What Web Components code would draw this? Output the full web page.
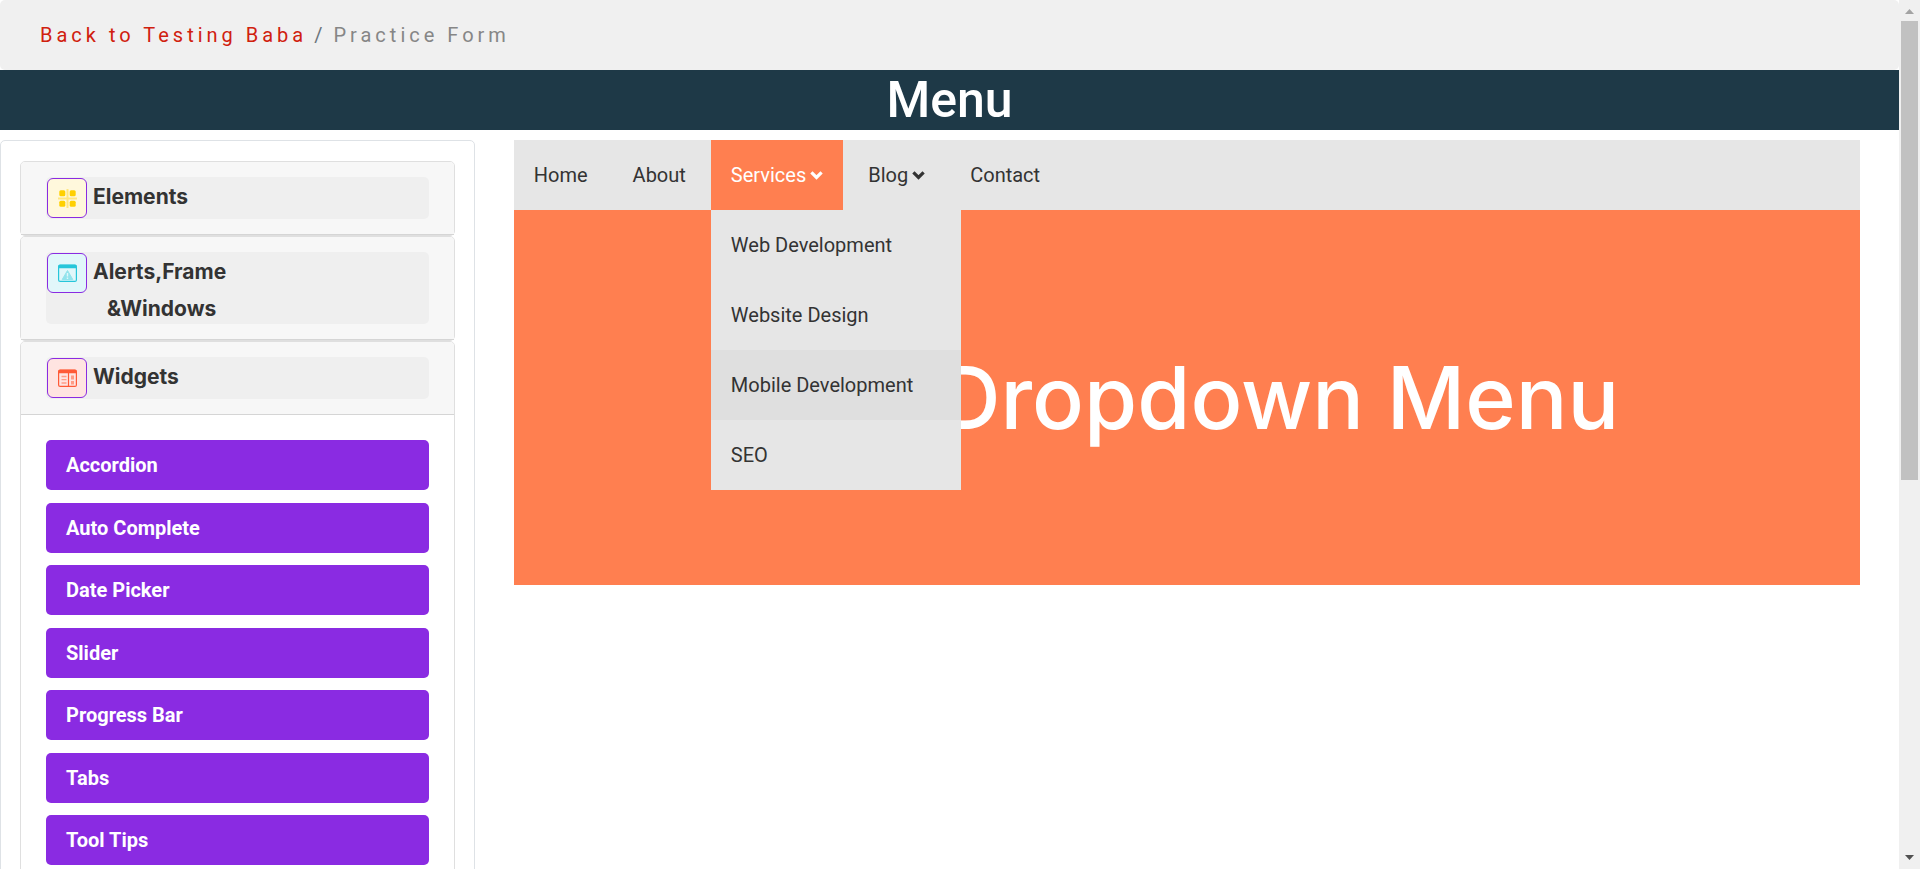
<!DOCTYPE html>
<html lang="en">
<head>
<meta charset="utf-8">
<title>Menu - Practice Form</title>
<style>
html, body { margin: 0; height: 100%; }
body { font-family: Roboto, "Liberation Sans", sans-serif; font-size: 20px; color: #333; background: #fff; overflow: hidden; }
</style>
</head>
<body>
<practice-page>
  <bread-crumb slot="top" href="#home" parent="Back to Testing Baba" current="Practice Form"></bread-crumb>
  <page-title slot="top">Menu</page-title>
  <side-panel slot="side">
    <accordion-card icon="elements">Elements</accordion-card>
    <accordion-card icon="alerts">Alerts,Frame<span slot="second">&amp;Windows</span></accordion-card>
    <accordion-card icon="widgets" open>Widgets
      <side-link slot="body" href="#accordion">Accordion</side-link>
      <side-link slot="body" href="#auto-complete">Auto Complete</side-link>
      <side-link slot="body" href="#date-picker">Date Picker</side-link>
      <side-link slot="body" href="#slider">Slider</side-link>
      <side-link slot="body" href="#progress-bar">Progress Bar</side-link>
      <side-link slot="body" href="#tabs">Tabs</side-link>
      <side-link slot="body" href="#tool-tips">Tool Tips</side-link>
    </accordion-card>
  </side-panel>
  <nav-bar>
    <nav-item href="#home">Home</nav-item>
    <nav-item href="#about">About</nav-item>
    <nav-item href="#services" arrow open>Services
      <menu-link slot="menu" href="#web">Web Development</menu-link>
      <menu-link slot="menu" href="#design">Website Design</menu-link>
      <menu-link slot="menu" href="#mobile" active>Mobile Development</menu-link>
      <menu-link slot="menu" href="#seo">SEO</menu-link>
    </nav-item>
    <nav-item href="#blog" arrow>Blog</nav-item>
    <nav-item href="#contact">Contact</nav-item>
  </nav-bar>
  <hero-banner>Dropdown Menu</hero-banner>
</practice-page>

<script>
const define = (name, render) => customElements.define(name, class extends HTMLElement {
  constructor() {
    super();
    this.attachShadow({ mode: 'open' }).innerHTML =
      '<style>*{box-sizing:border-box}a{text-decoration:none;color:inherit}</style>' + render(this);
  }
});

define('practice-page', () => `
  <style>
    :host { display: grid; grid-template-columns: minmax(0, 1fr) 21px; height: 100vh; }
    .view { overflow: hidden; }
    .columns { display: grid; grid-template-columns: 25% 1fr; align-items: start; margin-top: 10px; }
    main { padding: 0 39px; min-width: 0; }
  </style>
  <div class="view">
    <slot name="top"></slot>
    <div class="columns">
      <slot name="side"></slot>
      <main><slot></slot></main>
    </div>
  </div>
  <scroll-rail></scroll-rail>`);

define('scroll-rail', () => `
  <style>
    :host { display: grid; grid-template-rows: 21px 5fr 4fr 21px; background: #f0f0f0; }
    svg { display: block; width: 21px; height: 21px; }
    .thumb { margin: 0 2px; background: #c1c1c1; }
    .down { grid-row: 4; }
  </style>
  <svg viewBox="0 0 21 21" aria-hidden="true"><path d="M10.5 9 15 14H6z" fill="#a3a3a3"/></svg>
  <div class="thumb"></div>
  <svg class="down" viewBox="0 0 21 21" aria-hidden="true"><path d="M6 7h9l-4.500 5z" fill="#505050"/></svg>`);

define('bread-crumb', el => `
  <style>
    :host { display: block; background: #f0f0f0; border-radius: 5px; }
    nav { display: flex; align-items: center; gap: 7px; height: 70px; padding: 0 40px; letter-spacing: 4px; }
    a { color: #d0200e; }
    .sep { color: #6c757d; }
    .here { color: #868686; }
  </style>
  <nav aria-label="Breadcrumb"><a href="${el.getAttribute('href')}">${el.getAttribute('parent')}</a><span class="sep">/</span><span class="here">${el.getAttribute('current')}</span></nav>`);

define('page-title', () => `
  <style>
    :host { display: block; background: #1e3947; color: #fff; }
    h1 { margin: 0; font-size: 50px; font-weight: 500; line-height: 60px; text-align: center; }
  </style>
  <h1><slot></slot></h1>`);

define('side-panel', () => `
  <style>
    :host { display: block; box-sizing: border-box; border: 1px solid #dee2e6; border-radius: 5px; padding: 20px 19px; }
  </style>
  <slot></slot>`);

const ICONS = {
  elements: ['#fff8dc', `
    <path d="M9.500 0v19M0 9.500h19" stroke="#ffe680" stroke-width="2"/>
    <g fill="#ffd000"><rect x="1.300" y="1.300" width="6" height="6" rx="1.500"/><rect x="11.700" y="1.300" width="6" height="6" rx="1.500"/><rect x="1.300" y="11.700" width="6" height="6" rx="1.500"/><rect x="11.700" y="11.700" width="6" height="6" rx="1.500"/></g>`],
  alerts: ['#e1f7fa', `
    <rect x=".6" y="1.100" width="17.800" height="16.300" rx="1.500" fill="none" stroke="#26c6da" stroke-width="1.200"/>
    <path d="M.5 2Q.5 .7 2 .7h15q1.500 0 1.500 1.300v2.300H.5z" fill="#26c6da"/>
    <path d="M9.500 6.500 14.800 15.500H4.200z" fill="#93e3ec" stroke="#93e3ec" stroke-linejoin="round"/>
    <path d="M9.500 9v3.500M9.500 13.500V15" stroke="#e1f7fa" stroke-width="1.400"/>`],
  widgets: ['#ffe4e1', `
    <rect x=".6" y="1.100" width="17.800" height="16.300" rx="1.500" fill="none" stroke="#ff5a36" stroke-width="1.200"/>
    <path d="M.5 2Q.5 .7 2 .7h15q1.500 0 1.500 1.300v2.300H.5z" fill="#ff5a36"/>
    <path d="M10.500 4v13.500" stroke="#ff5a36" stroke-width="1.200"/>
    <path d="M3.500 7.500h5M3.500 10.700h5M3.500 14h5" stroke="#ff9c86" stroke-width="1.300"/>
    <path d="M13 6.500h3v4h-3zM13 12h3v3.500h-3z" fill="#ff9c86"/>`]
};

define('accordion-card', el => {
  const [tint, art] = ICONS[el.getAttribute('icon')];
  const open = el.hasAttribute('open');
  return `
  <style>
    :host { display: block; border: 1px solid #dfdfdf; border-radius: 5px; }
    header { padding: 15px 25px; background: #f7f7f7; border-bottom: 1px solid #d5d5d5; border-radius: 4px 4px 0 0; }
    button { display: flex; gap: 6px; width: 100%; padding: 1px; border: 0; border-radius: 5px; background: #efefef;
      color: #333; font: 700 21px/37px Inter, "Open Sans", sans-serif; text-align: left; }
    .icon { display: grid; place-items: center; flex: none; width: 40px; height: 40px; border: 1px solid #8a2be2; border-radius: 6px; background: ${tint}; }
    svg { display: block; width: 19px; height: 19px; }
    ::slotted([slot=second]) { display: block; padding-left: 14px; margin-bottom: -4px; }
    .body { padding: 25px; }
  </style>
  <header><button type="button" aria-expanded="${open}"><span class="icon"><svg viewBox="0 0 19 19" aria-hidden="true">${art}</svg></span><span><slot></slot><slot name="second"></slot></span></button></header>
  ${open ? '<div class="body"><slot name="body"></slot></div>' : ''}`;
});

define('side-link', el => `
  <style>
    :host { display: block; margin-bottom: 13px; }
    :host(:nth-child(even)) { margin-bottom: 12px; }
    :host(:last-child) { margin-bottom: 0; }
    a { display: block; padding: 0 20px; border-radius: 5px; background: #8a2be2; color: #fff; font-weight: 700; line-height: 50px; }
  </style>
  <a href="${el.getAttribute('href')}"><slot></slot></a>`);

define('nav-bar', () => `
  <style>
    :host { display: block; background: #e6e6e6; }
    nav { display: flex; gap: 5px; height: 70px; }
  </style>
  <nav aria-label="Main"><slot></slot></nav>`);

define('nav-item', el => `
  <style>
    :host { display: block; position: relative; }
    a { display: flex; align-items: center; gap: 4px; padding: 0 20px; line-height: 70px; }
    :host([open]) a { background: #ff7f50; color: #fff; }
    svg { width: 13px; height: 16px; fill: none; stroke: currentColor; stroke-width: 3.2; }
    .menu { position: absolute; z-index: 1; top: 100%; left: 0; width: 250px; background: #e6e6e6; }
  </style>
  <a href="${el.getAttribute('href')}"><span><slot></slot></span>${el.hasAttribute('arrow') ? '<svg viewBox="0 0 13 16" aria-hidden="true"><path d="M1.400 5.300 6.500 10.400 11.600 5.300"/></svg>' : ''}</a>
  ${el.hasAttribute('open') ? '<div class="menu"><slot name="menu"></slot></div>' : ''}`);

define('menu-link', el => `
  <style>
    :host { display: block; }
    :host([active]) { background: #dfdfdf; }
    a { display: block; padding: 0 20px; line-height: 70px; }
  </style>
  <a href="${el.getAttribute('href')}"><slot></slot></a>`);

define('hero-banner', () => `
  <style>
    :host { display: grid; place-items: center; box-sizing: border-box; height: 375px; padding-left: 184px; background: #ff7f50; color: #fff; }
    h2 { margin: 0; font: 500 86px/96px Inter, "Open Sans", sans-serif; white-space: nowrap; }
  </style>
  <h2><slot></slot></h2>`);
</script>
</body>
</html>
